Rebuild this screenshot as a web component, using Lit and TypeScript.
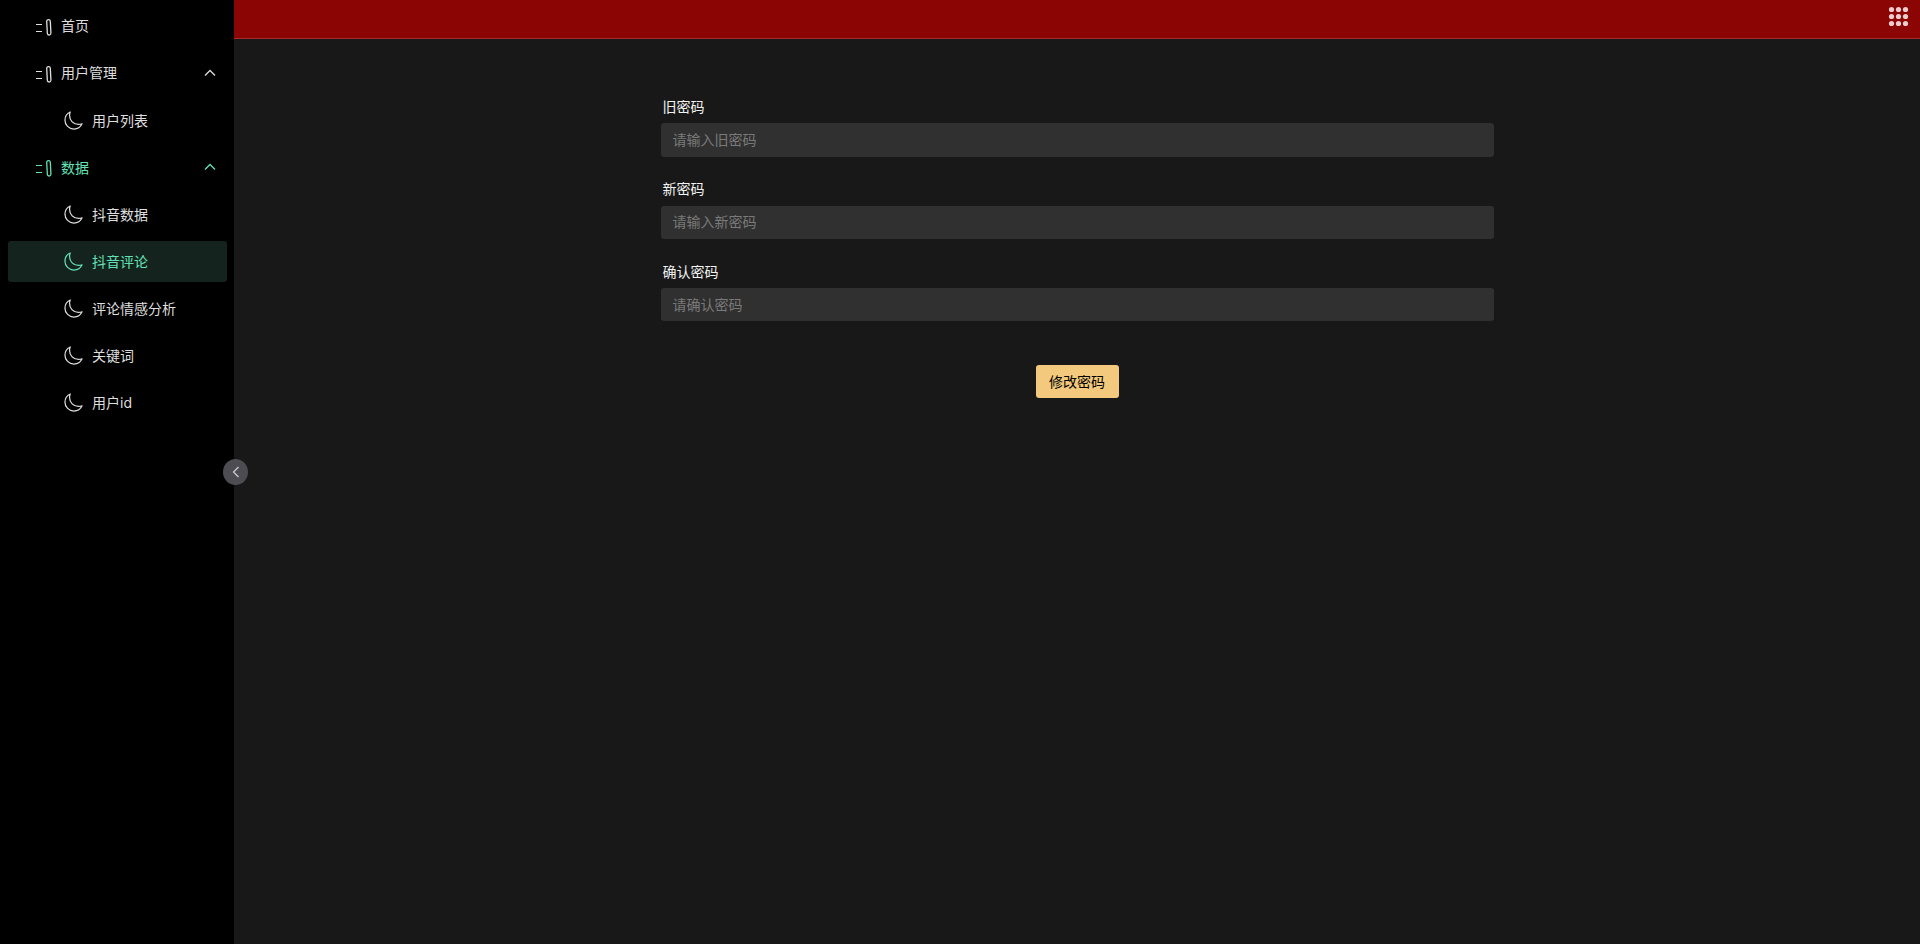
import { LitElement, html, css, svg } from "lit";
import { customElement } from "lit/decorators.js";

const moon = html`<svg class="moon" viewBox="0 0 512 512"><path d="M160 136c0-30.62 4.51-61.61 16-88C99.57 81.27 48 159.32 48 248c0 119.29 96.71 216 216 216 88.68 0 166.73-51.57 200-128-26.39 11.49-57.38 16-88 16-119.29 0-216-96.71-216-216z" fill="none" stroke="currentColor" stroke-width="30" stroke-linecap="round" stroke-linejoin="round"/></svg>`;
const clip = html`<svg class="clip" viewBox="0 0 16 16"><path d="M0 5.5h6M0 12.5h6" stroke="currentColor" stroke-width="1.2" fill="none"/><rect x="11" y="0.6" width="3.6" height="15.4" rx="1.8" transform="rotate(-3 13 8)" stroke="currentColor" stroke-width="1.3" fill="none"/></svg>`;
const chev = (d: string) => html`<svg class="chev" viewBox="0 0 12 8"><path d="${d}" fill="none" stroke="currentColor" stroke-width="1.3"/></svg>`;

const dots = [0, 1, 2].flatMap((y) => [0, 1, 2].map((x) => svg`<circle cx="${2.5 + x * 7}" cy="${2.5 + y * 7}" r="2.6" fill="currentColor"/>`));

@customElement("app-root")
export class AppRoot extends LitElement {
  static styles = css`
    :host { display: block; height: 944px; overflow: hidden; font-family: Inter, "Noto Sans CJK SC", "Liberation Sans", sans-serif; font-size: 14px; color: #e6e6e6; background: #181818; }
    * { box-sizing: border-box; }
    .shell { display: flex; height: 944px; position: relative; }
    .side { width: 234px; flex: none; background: #000; padding: 0 7px 0 8px; }
    .item { height: 42px; margin-top: 5px; display: flex; align-items: center; border-radius: 3px; color: #dfdfdf; }
    .top { padding-left: 28px; gap: 9px; }
    .top.raised span { padding-bottom: 2px; }
    .sub { padding-left: 55px; gap: 8px; }
    .item.green { color: #63e2b7; }
    .item.active { background: #14231d; color: #63e2b7; height: 41px; margin-top: 6px; padding-bottom: 1px; }
    .clip { width: 16px; height: 16px; flex: none; margin-top: 2px; overflow: visible; }
    .moon { width: 21px; height: 21px; flex: none; }
    .chev { width: 12px; height: 8px; margin-left: auto; margin-right: 11px; }
    .collapse { position: absolute; left: 223px; top: 459px; width: 25px; height: 26px; border-radius: 50%; background: #4c4c52; color: #d0d0d0; display: flex; align-items: center; justify-content: center; }
    .collapse svg { width: 8px; height: 12px; }
    .main { flex: 1; min-width: 0; display: flex; flex-direction: column; }
    .bar { height: 39px; flex: none; background: #8b0505; border-bottom: 1px solid #a52a2a; display: flex; justify-content: flex-end; padding: 7px 12px 0 0; color: #eccccc; }
    .bar svg { width: 19px; height: 19px; overflow: visible; }
    .form { width: 833px; margin: 0 auto; padding-top: 55.8px; display: flex; flex-direction: column; align-items: stretch; }
    .field { height: 82.45px; display: flex; flex-direction: column; }
    label { height: 28.3px; line-height: 24px; padding-left: 2px; color: #f2f2f2; }
    .input { height: 33.45px; background: #303030; border-radius: 3px; padding: 0 0 2px 12px; display: flex; align-items: center; color: #7a7a7a; }
    .actions { display: flex; justify-content: center; margin-top: 22.85px; }
    .btn { width: 83px; height: 33px; border-radius: 3px; background: #f2c97d; color: #000; display: flex; align-items: center; justify-content: center; }
  `;

  render() {
    const fields: [string, string][] = [["旧密码", "请输入旧密码"], ["新密码", "请输入新密码"], ["确认密码", "请确认密码"]];
    return html`<div class="shell">
      <nav class="side">
        <div class="item top raised">${clip}<span>首页</span></div>
        <div class="item top raised">${clip}<span>用户管理</span>${chev("M1 6.5l5-5 5 5")}</div>
        <div class="item sub">${moon}<span>用户列表</span></div>
        <div class="item top green">${clip}<span>数据</span>${chev("M1 6.5l5-5 5 5")}</div>
        <div class="item sub">${moon}<span>抖音数据</span></div>
        <div class="item sub active">${moon}<span>抖音评论</span></div>
        <div class="item sub">${moon}<span>评论情感分析</span></div>
        <div class="item sub">${moon}<span>关键词</span></div>
        <div class="item sub">${moon}<span>用户id</span></div>
      </nav>
      <div class="collapse"><svg viewBox="0 0 8 12"><path d="M6.5 1l-5 5 5 5" fill="none" stroke="currentColor" stroke-width="1.2"/></svg></div>
      <div class="main">
        <header class="bar"><svg viewBox="0 0 19 19">${dots}</svg></header>
        <div class="form">
          ${fields.map(([l, p]) => html`<div class="field"><label>${l}</label><div class="input">${p}</div></div>`)}
          <div class="actions"><div class="btn">修改密码</div></div>
        </div>
      </div>
    </div>`;
  }
}
